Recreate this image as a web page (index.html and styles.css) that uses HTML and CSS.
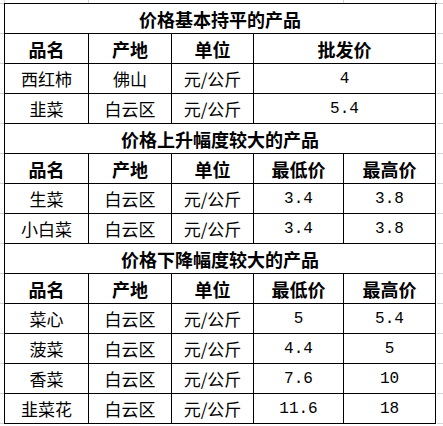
FILE: index.html
```html
<!DOCTYPE html>
<html lang="zh-CN">
<head>
<meta charset="utf-8">
<title>价格表</title>
<link rel="stylesheet" href="styles.css">
</head>
<body>
<div class="sheet">
  <div class="grid">
    <div class="cell title span5">价格基本持平的产品</div>
    <div class="cell head">品名</div>
    <div class="cell head">产地</div>
    <div class="cell head">单位</div>
    <div class="cell head span2">批发价</div>

    <div class="cell">西红柿</div>
    <div class="cell">佛山</div>
    <div class="cell">元/公斤</div>
    <div class="cell num span2">4</div>

    <div class="cell">韭菜</div>
    <div class="cell">白云区</div>
    <div class="cell">元/公斤</div>
    <div class="cell num span2">5.4</div>

    <div class="cell title span5">价格上升幅度较大的产品</div>
    <div class="cell head">品名</div>
    <div class="cell head">产地</div>
    <div class="cell head">单位</div>
    <div class="cell head">最低价</div>
    <div class="cell head">最高价</div>

    <div class="cell">生菜</div>
    <div class="cell">白云区</div>
    <div class="cell">元/公斤</div>
    <div class="cell num">3.4</div>
    <div class="cell num">3.8</div>

    <div class="cell">小白菜</div>
    <div class="cell">白云区</div>
    <div class="cell">元/公斤</div>
    <div class="cell num">3.4</div>
    <div class="cell num">3.8</div>

    <div class="cell title span5">价格下降幅度较大的产品</div>
    <div class="cell head">品名</div>
    <div class="cell head">产地</div>
    <div class="cell head">单位</div>
    <div class="cell head">最低价</div>
    <div class="cell head">最高价</div>

    <div class="cell">菜心</div>
    <div class="cell">白云区</div>
    <div class="cell">元/公斤</div>
    <div class="cell num">5</div>
    <div class="cell num">5.4</div>

    <div class="cell">菠菜</div>
    <div class="cell">白云区</div>
    <div class="cell">元/公斤</div>
    <div class="cell num">4.4</div>
    <div class="cell num">5</div>

    <div class="cell">香菜</div>
    <div class="cell">白云区</div>
    <div class="cell">元/公斤</div>
    <div class="cell num">7.6</div>
    <div class="cell num">10</div>

    <div class="cell">韭菜花</div>
    <div class="cell">白云区</div>
    <div class="cell">元/公斤</div>
    <div class="cell num">11.6</div>
    <div class="cell num">18</div>
  </div>
</div>
</body>
</html>
```

FILE: styles.css
```css
html, body {
  margin: 0;
  padding: 0;
  background: #ffffff;
}

body {
  width: 443px;
  height: 426px;
  overflow: hidden;
  background-color: #ffffff;
  background-image:
    linear-gradient(#d4d4d4, #d4d4d4),
    linear-gradient(#d4d4d4, #d4d4d4),
    linear-gradient(#d4d4d4, #d4d4d4),
    linear-gradient(#d4d4d4, #d4d4d4),
    repeating-linear-gradient(to bottom, #d4d4d4 0, #d4d4d4 1px, transparent 1px, transparent 30px);
  background-repeat: no-repeat, no-repeat, no-repeat, no-repeat, repeat-y;
  background-size: 1px 3px, 1px 3px, 1px 3px, 1px 3px, 443px 30px;
  background-position: 4px 0, 88px 0, 343px 0, 435px 0, 0 3px;
}

.sheet {
  padding: 3px 0 0 4px;
}

.grid {
  display: grid;
  grid-template-columns: 84px 83px 82px 90px 92px;
  grid-auto-rows: 30px;
  width: 432px;
  border-top: 1px solid #000;
  border-left: 1px solid #000;
  background: #ffffff;
  font-family: "Noto Sans CJK SC", "Noto Sans", sans-serif;
  font-size: 17px;
  color: #000;
}

.cell {
  box-sizing: border-box;
  display: flex;
  align-items: center;
  justify-content: center;
  border-right: 1px solid #000;
  border-bottom: 1px solid #000;
  line-height: 1;
  white-space: nowrap;
}

.grid > .cell:first-child,
.grid > .cell:nth-child(5n) {
}

.span2 {
  grid-column: span 2;
}

.span5 {
  grid-column: span 5;
}

.title,
.head {
  font-weight: 700;
  font-size: 18px;
}

.num {
  font-family: "Liberation Mono", "DejaVu Sans Mono", monospace;
  font-size: 16px;
}
```
